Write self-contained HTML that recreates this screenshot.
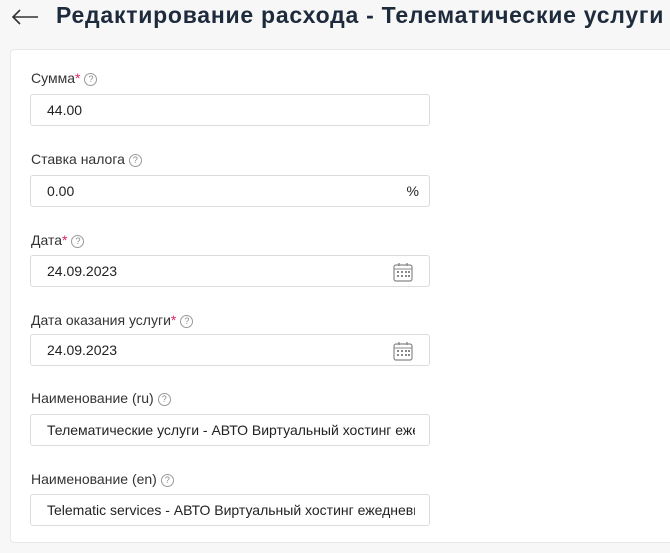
<!DOCTYPE html>
<html><head><meta charset="utf-8"><style>
body{margin:0;width:670px;height:553px;background:#f7f7f7;font-family:"Liberation Sans",sans-serif;overflow:hidden;position:relative}
.t{position:absolute;left:56px;top:2px;font-size:23px;font-weight:bold;color:#1e2b3c;white-space:nowrap;letter-spacing:0.75px}
.card{position:absolute;left:10px;top:49px;width:680px;height:492px;background:#fff;border:1px solid #e8e8e8;border-radius:4px}
.l{position:absolute;left:31px;font-size:14px;color:#333;white-space:nowrap}
.l b{color:#e0245e;font-weight:normal}
.q{display:inline-block;width:11px;height:11px;border:1px solid #999;border-radius:50%;font-size:9px;line-height:11px;text-align:center;color:#888;margin-left:4px;vertical-align:1px}
.i{position:absolute;left:30px;width:398px;height:30px;border:1px solid #dcdcdc;border-radius:3px;background:#fff;font-size:14px;color:#222;line-height:30px;box-sizing:content-box;overflow:hidden;white-space:nowrap}
.i span{position:absolute;left:16px;width:368px;overflow:hidden}
.pc{position:absolute;right:10px;top:0}
.cal{position:absolute;right:16px;top:6px}
</style></head><body>
<svg style="position:absolute;left:11px;top:9px" width="28" height="16" viewBox="0 0 28 16"><path d="M27 8H2M9 1L2 8l7 7" fill="none" stroke="#333" stroke-width="1.6"/></svg>
<div class="t">Редактирование расхода - Телематические услуги</div>
<div class="card"></div>
<div class="l" style="top:70px">Сумма<b>*</b><span class="q">?</span></div>
<div class="i" style="top:94px"><span>44.00</span></div>
<div class="l" style="top:151px">Ставка налога<span class="q">?</span></div>
<div class="i" style="top:175px"><span>0.00</span><div class="pc">%</div></div>
<div class="l" style="top:232px">Дата<b>*</b><span class="q">?</span></div>
<div class="i" style="top:255px"><span>24.09.2023</span><svg class="cal" width="20" height="20" viewBox="0 0 20 20"><rect x="1" y="3" width="18" height="16" rx="2" fill="none" stroke="#888" stroke-width="1.2"/><line x1="1" y1="7" x2="19" y2="7" stroke="#888"/><line x1="6" y1="1" x2="6" y2="4" stroke="#888" stroke-width="1.4"/><line x1="14" y1="1" x2="14" y2="4" stroke="#888" stroke-width="1.4"/><g fill="#888"><rect x="4" y="9" width="2" height="2"/><rect x="8" y="9" width="2" height="2"/><rect x="12" y="9" width="2" height="2"/><rect x="15" y="9" width="2" height="2"/><rect x="4" y="13" width="2" height="2"/><rect x="8" y="13" width="2" height="2"/><rect x="12" y="13" width="2" height="2"/><rect x="15" y="13" width="2" height="2"/></g></svg></div>
<div class="l" style="top:312px">Дата оказания услуги<b>*</b><span class="q">?</span></div>
<div class="i" style="top:334px"><span>24.09.2023</span><svg class="cal" width="20" height="20" viewBox="0 0 20 20"><rect x="1" y="3" width="18" height="16" rx="2" fill="none" stroke="#888" stroke-width="1.2"/><line x1="1" y1="7" x2="19" y2="7" stroke="#888"/><line x1="6" y1="1" x2="6" y2="4" stroke="#888" stroke-width="1.4"/><line x1="14" y1="1" x2="14" y2="4" stroke="#888" stroke-width="1.4"/><g fill="#888"><rect x="4" y="9" width="2" height="2"/><rect x="8" y="9" width="2" height="2"/><rect x="12" y="9" width="2" height="2"/><rect x="15" y="9" width="2" height="2"/><rect x="4" y="13" width="2" height="2"/><rect x="8" y="13" width="2" height="2"/><rect x="12" y="13" width="2" height="2"/><rect x="15" y="13" width="2" height="2"/></g></svg></div>
<div class="l" style="top:390px">Наименование (ru)<span class="q">?</span></div>
<div class="i" style="top:414px"><span>Телематические услуги - АВТО Виртуальный хостинг ежедневный</span></div>
<div class="l" style="top:471px">Наименование (en)<span class="q">?</span></div>
<div class="i" style="top:494px"><span>Telematic services - АВТО Виртуальный хостинг ежедневный</span></div>
</body></html>
